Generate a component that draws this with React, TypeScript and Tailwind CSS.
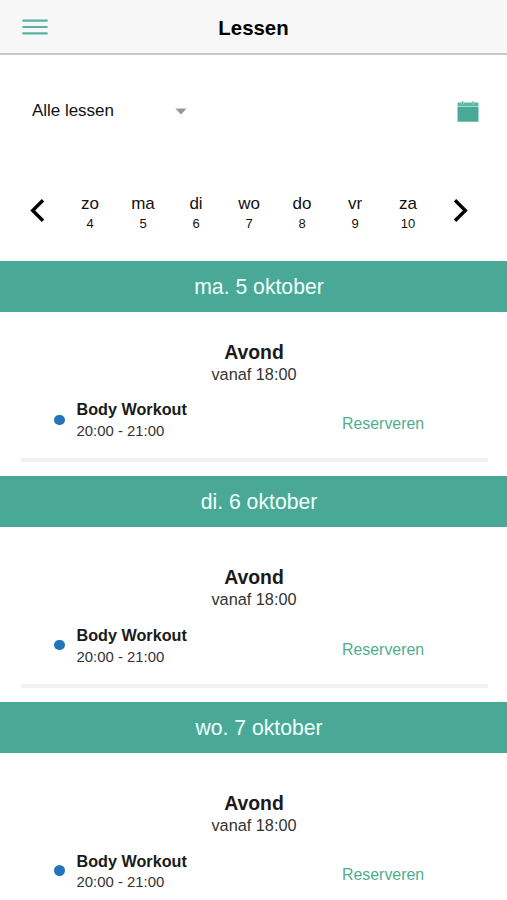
type Section = { title: string; top: string; gap: string; dot: string; action: string; end: string };

const days = [
  ["zo", "4"],
  ["ma", "5"],
  ["di", "6"],
  ["wo", "7"],
  ["do", "8"],
  ["vr", "9"],
  ["za", "10"],
];

const sections: Section[] = [
  { title: "ma. 5 oktober", top: "pt-7", gap: "mt-3.5", dot: "mb-0", action: "mt-[7px]", end: "pt-px leading-5" },
  { title: "di. 6 oktober", top: "pt-[38px]", gap: "mt-[15px]", dot: "mb-[2px]", action: "mt-[7px]", end: "pt-px leading-5" },
  { title: "wo. 7 oktober", top: "pt-[38px]", gap: "mt-[15px]", dot: "mb-[2px]", action: "mt-[5px]", end: "leading-5" },
];

function Header() {
  return (
    <header className="grid h-[55px] shrink-0 grid-cols-[1fr_auto_1fr] items-center border-b-2 border-[#c8c8c8] bg-[#f7f7f7]">
      <button aria-label="Menu" className="ml-[22px] w-[26px] pt-px">
        <svg width="26" height="16" viewBox="0 0 26 16">
          <path
            d="M1.2 1.7h23.6M1.2 8h23.6M1.2 14.4h23.6"
            stroke="#5bb39f"
            strokeWidth="2.2"
            strokeLinecap="round"
          />
        </svg>
      </button>
      <h1 className="pt-[3px] text-[20.4px] leading-[26px] font-bold text-black">Lessen</h1>
    </header>
  );
}

function Filter() {
  return (
    <div className="flex h-[113px] shrink-0 items-center pr-7 pl-8">
      <button className="flex w-[154.5px] items-center justify-between pb-px text-[17px] leading-5 tracking-[-0.03px] text-[#111]">
        Alle lessen
        <svg className="mt-px" width="12" height="7" viewBox="0 0 12 7">
          <path d="M0.3 0.4h11.4L6 6.6z" fill="#999" />
        </svg>
      </button>
      <svg className="ml-auto" width="22" height="21" viewBox="0 0 22 21">
        <path d="M0.5 1.5h21V5h-21z" fill="#5fb6a2" />
        <path d="M0.5 6h21v14.7h-21z" fill="#4aa996" />
        <path d="M0.5 5h21v1h-21z" fill="#a3dccd" />
        <path d="M5.5 0.3v3M16 0.3v3" stroke="#a3dccd" strokeWidth="2.4" />
        <path d="M5.5 0.8v2M16 0.8v2" stroke="#4aa996" strokeWidth="1" />
      </svg>
    </div>
  );
}

function Week() {
  return (
    <nav className="flex h-[93px] shrink-0 items-start justify-between pt-[25px] pr-[39px] pl-[30px]">
      <svg className="mt-[5px]" width="15" height="25" viewBox="0 0 15 25">
        <path d="M13 2.2 2.7 12.5 13 22.8" fill="none" stroke="#000" strokeWidth="3.4" />
      </svg>
      <div className="flex">
        {days.map(([name, num]) => (
          <button key={name} className="flex w-[53px] flex-col items-center text-[#111]">
            <span className="text-[17px] leading-[21px]">{name}</span>
            <span className="mt-px text-[13px] leading-[18px]">{num}</span>
          </button>
        ))}
      </div>
      <svg className="mt-[5px]" width="15" height="25" viewBox="0 0 15 25">
        <path d="M2 2.2 12.3 12.5 2 22.8" fill="none" stroke="#000" strokeWidth="3.4" />
      </svg>
    </nav>
  );
}

function Day({ title, top, gap, dot, action, end }: Section) {
  return (
    <section className="shrink-0">
      <h2 className="flex h-[51px] items-center justify-center bg-[#4aa996] pt-px pl-[11px] text-[21.2px] leading-6 text-[#effffb]">
        {title}
      </h2>
      <div className={"flex flex-col items-center pb-3.5 " + top}>
        <h3 className="pl-px text-[19.4px] leading-6 font-bold text-[#1a1a1a]">Avond</h3>
        <p className="pl-px text-[16.3px] leading-[21px] text-[#333]">vanaf 18:00</p>
        <div className={"flex w-full items-center pl-[54px] " + gap}>
          <span className={"size-[10.5px] rounded-full bg-[#2274bb] " + dot} />
          <div className="ml-3 w-[265.5px]">
            <p className="text-[16.2px] leading-[21px] font-bold text-[#1a1a1a]">Body Workout</p>
            <p className={"text-[14.9px] text-[#333] " + end}>20:00 - 21:00</p>
          </div>
          <button className={"text-[15.9px] leading-[21px] text-[#4fae90] " + action}>Reserveren</button>
        </div>
        <div className="mt-[17px] ml-px h-1 w-[467px] bg-[#f1f1f3]" />
      </div>
    </section>
  );
}

export default function App() {
  return (
    <main className="flex h-[900px] w-full flex-col overflow-hidden bg-white font-['Liberation_Sans',Arial,sans-serif]">
      <Header />
      <Filter />
      <Week />
      {sections.map((s) => (
        <Day key={s.title} {...s} />
      ))}
    </main>
  );
}
